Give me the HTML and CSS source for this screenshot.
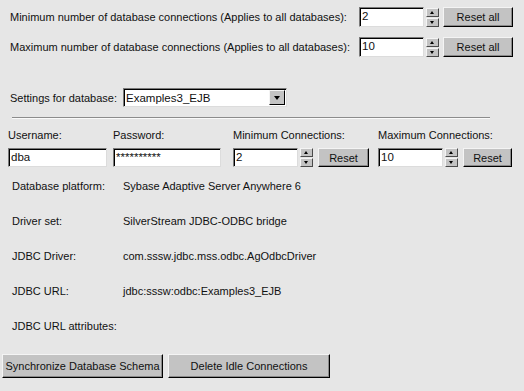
FILE: index.html
```html
<!doctype html>
<html lang="en">
	<head>
		<meta charset="utf-8">
		<title>Database connections</title>
		<link rel="stylesheet" href="styles.css">
	</head>
  <body>
    <div class="global">
      <div class="global-row">
        <span class="global-label">Minimum number of database connections (Applies to all databases):</span>
        <span class="field field-global">2</span>
        <span class="spin"><span class="spin-up"></span><span class="spin-down"></span></span>
        <span class="btn btn-global">Reset all</span>
      </div>
      <div class="global-row">
        <span class="global-label">Maximum number of database connections (Applies to all databases):</span>
        <span class="field field-global">10</span>
        <span class="spin"><span class="spin-up"></span><span class="spin-down"></span></span>
        <span class="btn btn-global">Reset all</span>
      </div>
    </div>

    <div class="db-select">
      <span class="db-select-label">Settings for database:</span>
      <span class="combo">
        <span class="combo-text">Examples3_EJB</span>
        <span class="combo-btn"><span class="combo-arrow"></span></span>
      </span>
    </div>

    <hr class="sep">

    <div class="db-grid">
      <span class="col-label">Username:</span>
      <span class="col-label">Password:</span>
      <span class="col-label">Minimum Connections:</span>
      <span class="col-label">Maximum Connections:</span>

      <span class="field field-user">dba</span>
      <span class="field field-pass">**********</span>
      <span class="spin-group">
        <span class="field field-num">2</span>
        <span class="spin"><span class="spin-up"></span><span class="spin-down"></span></span>
        <span class="btn btn-reset">Reset</span>
      </span>
      <span class="spin-group">
        <span class="field field-num">10</span>
        <span class="spin"><span class="spin-up"></span><span class="spin-down"></span></span>
        <span class="btn btn-reset">Reset</span>
      </span>
    </div>

    <dl class="info">
      <div class="info-row"><dt>Database platform:</dt><dd>Sybase Adaptive Server Anywhere 6</dd></div>
      <div class="info-row"><dt>Driver set:</dt><dd>SilverStream JDBC-ODBC bridge</dd></div>
      <div class="info-row"><dt>JDBC Driver:</dt><dd>com.sssw.jdbc.mss.odbc.AgOdbcDriver</dd></div>
      <div class="info-row"><dt>JDBC URL:</dt><dd>jdbc:sssw:odbc:Examples3_EJB</dd></div>
      <div class="info-row"><dt>JDBC URL attributes:</dt><dd></dd></div>
    </dl>

    <div class="actions">
      <span class="btn btn-sync">Synchronize Database Schema</span>
      <span class="btn btn-idle">Delete Idle Connections</span>
    </div>
  </body>
</html>
```

FILE: styles.css
```css
* { box-sizing: border-box; }

:root {
	--font-family: "Liberation Sans", Arial, sans-serif;
	--panel: #e6e6e6;
	--button: #c3c3c3;
	--text-color: #111;
}

html,
body {
	margin: 0;
	padding: 0;
	width: 524px;
	height: 391px;
	overflow: hidden;
	font-family: var(--font-family);
	font-size: 11px;
	color: var(--text-color);
	background-color: var(--panel);
	white-space: nowrap;
}

/* Fields and buttons */
.field {
	display: flex;
	align-items: center;
	height: 20px;
	padding-left: 2px;
	background: #fff;
	border-top: 1px solid #7a7a7a;
	border-left: 1px solid #7a7a7a;
	border-right: 1px solid #dcdcdc;
	border-bottom: 1px solid #dcdcdc;
	box-shadow: inset 1px 1px 0 #000;
	font-size: 11.5px;
	line-height: 1;
}

.btn {
	display: flex;
	align-items: center;
	justify-content: center;
	height: 20px;
	background: var(--button);
	border-top: 1px solid #f4f4f4;
	border-left: 1px solid #f4f4f4;
	border-right: 1px solid #000;
	border-bottom: 1px solid #000;
	box-shadow: inset -1px -1px 0 #8a8a8a;
	font-size: 11px;
}

.spin {
	display: flex;
	flex-direction: column;
	justify-content: center;
	gap: 1px;
	width: 13px;
	height: 20px;
	margin-left: 2px;
}
.spin-up,
.spin-down {
	position: relative;
	height: 9px;
	background: var(--button);
	border-top: 1px solid #f4f4f4;
	border-left: 1px solid #f4f4f4;
	border-right: 1px solid #4a4a4a;
	border-bottom: 1px solid #4a4a4a;
}
.spin-up:after,
.spin-down:after {
	content: "";
	position: absolute;
	left: 3px;
	top: 2px;
	border-left: 2.5px solid transparent;
	border-right: 2.5px solid transparent;
}
.spin-up:after {
	border-bottom: 3px solid #000;
}
.spin-down:after {
	border-top: 3px solid #000;
}

/* Global limits */
.global {
	padding: 7px 0 0 10px;
	display: flex;
	flex-direction: column;
	gap: 10px;
}
.global-row {
	display: flex;
	align-items: center;
}
.global-label {
	width: 349px;
}
.field-global {
	width: 65px;
}
.btn-global {
	width: 70px;
	margin-left: 4px;
}

/* Database chooser */
.db-select {
	display: flex;
	align-items: center;
	margin-top: 31px;
	padding-left: 10px;
}
.db-select-label {
	width: 113px;
}
.combo {
	display: flex;
	align-items: center;
	justify-content: space-between;
	width: 164px;
	height: 19px;
	background: #fff;
	border-top: 1px solid #7a7a7a;
	border-left: 1px solid #7a7a7a;
	border-right: 1px solid #dcdcdc;
	border-bottom: 1px solid #dcdcdc;
	box-shadow: inset 1px 1px 0 #000;
	padding-left: 2px;
	font-size: 11.5px;
}
.combo-btn {
	display: flex;
	align-items: center;
	justify-content: center;
	width: 16px;
	height: 15px;
	margin-right: 1px;
	background: var(--button);
	border-top: 1px solid #f4f4f4;
	border-left: 1px solid #f4f4f4;
	border-right: 1px solid #000;
	border-bottom: 1px solid #000;
}
.combo-arrow {
	border-left: 3.5px solid transparent;
	border-right: 3.5px solid transparent;
	border-top: 4px solid #000;
}

.sep {
	margin: 10px 34px 0 12px;
	border: 0;
	border-top: 1px solid #8c8c8c;
	border-bottom: 1px solid #fafafa;
}

/* Per database settings */
.db-grid {
	display: grid;
	grid-template-columns: 105px 120px 145px 146px;
	row-gap: 7px;
	padding-left: 8px;
	margin-top: 10px;
}
.field-user {
	width: 99px;
	height: 19px;
}
.field-pass {
	width: 108px;
	height: 19px;
}
.spin-group {
	display: flex;
	align-items: center;
}
.field-num {
	width: 65px;
	height: 19px;
}
.spin-group .spin {
	height: 19px;
}
.btn-reset {
	width: 51px;
	height: 19px;
	margin-left: 5px;
}
.spin-group:last-child .btn-reset {
	width: 49px;
}

/* Info list */
.info {
	margin: 12px 0 0 12px;
	display: flex;
	flex-direction: column;
	gap: 21px;
}
.info-row {
	display: flex;
	height: 14px;
	align-items: center;
}
.info dt {
	width: 111px;
}
.info dd {
	margin: 0;
}

/* Bottom actions */
.actions {
	display: flex;
	gap: 5px;
	margin: 21px 0 0 2px;
}
.btn-sync {
	width: 161px;
	height: 24px;
}
.btn-idle {
	width: 162px;
	height: 24px;
}
```
